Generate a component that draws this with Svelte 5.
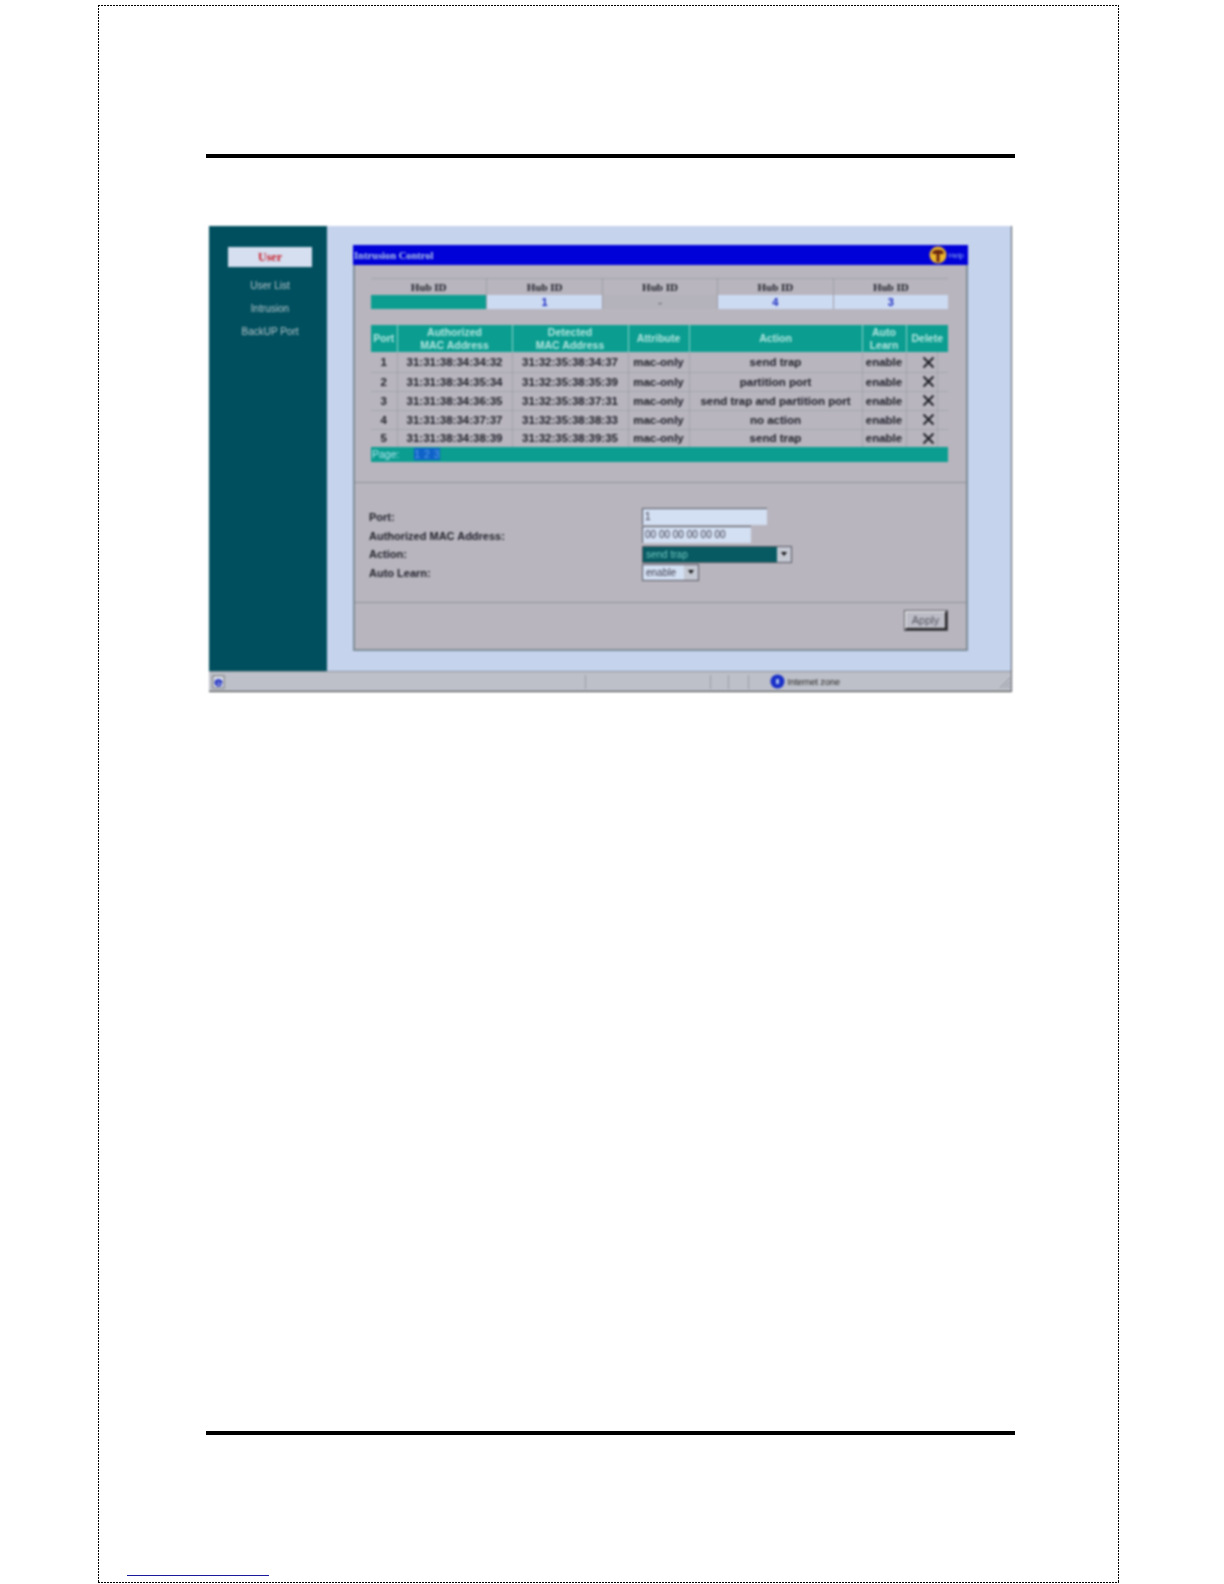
<script lang="ts">
  const hubs = ['', '1', '-', '4', '3'];
  const rows = [
    ['1', '31:31:38:34:34:32', '31:32:35:38:34:37', 'mac-only', 'send trap'],
    ['2', '31:31:38:34:35:34', '31:32:35:38:35:39', 'mac-only', 'partition port'],
    ['3', '31:31:38:34:36:35', '31:32:35:38:37:31', 'mac-only', 'send trap and partition port'],
    ['4', '31:31:38:34:37:37', '31:32:35:38:38:33', 'mac-only', 'no action'],
    ['5', '31:31:38:34:38:39', '31:32:35:38:39:35', 'mac-only', 'send trap']
  ];
  const colWidths = [26, 115, 116, 61, 173, 44, 31, 11];
  const formLabels = ['Port:', 'Authorized MAC Address:', 'Action:', 'Auto Learn:'];
</script>

<div class="sheet">
  <div class="rule"></div>

  <div class="shot">
    <div class="browser">
      <nav class="side">
        <div class="side-btn">User</div>
        <a href="#list">User List</a>
        <a href="#intrusion">Intrusion</a>
        <a href="#backup">BackUP Port</a>
      </nav>

      <main class="content">
        <section class="panel">
          <header class="title">
            <span>Intrusion Control</span>
            <span class="help">
              <svg width="18" height="18" viewBox="0 0 18 18" aria-hidden="true">
                <circle cx="9" cy="9" r="8.5" fill="#eab52a" />
                <path d="M3.5 5.5C6 3 12 3 14.5 5.5V8H10.5V16H7.5V8H3.5z" fill="#6a2412" />
              </svg>
              <small>Help</small>
            </span>
          </header>

          <div class="top">
            <div class="hubs">
              {#each hubs as hub, i}
                <div class="hub">
                  <div class="hub-head">Hub ID</div>
                  <div class="hub-val" class:sel={i === 0} class:off={i === 2}>{hub}</div>
                </div>
              {/each}
            </div>

            <table>
              <colgroup>
                {#each colWidths as w}<col style="width:{w}px" />{/each}
              </colgroup>
              <thead>
                <tr>
                  <th>Port</th>
                  <th>Authorized<br />MAC Address</th>
                  <th>Detected<br />MAC Address</th>
                  <th>Attribute</th>
                  <th>Action</th>
                  <th>Auto<br />Learn</th>
                  <th colspan="2">Delete</th>
                </tr>
              </thead>
              <tbody>
                {#each rows as row}
                  <tr>
                    {#each row as cell}
                      <td>{cell}</td>
                    {/each}
                    <td>enable</td>
                    <td class="del">
                      <svg width="13" height="13" viewBox="0 0 13 13" aria-hidden="true">
                        <path d="M1.5 1.5 11.5 11.5M11.5 1.5 1.5 11.5" stroke="#1a1a22" stroke-width="1.8" />
                      </svg>
                    </td>
                    <td></td>
                  </tr>
                {/each}
              </tbody>
            </table>

            <div class="pager">Page: <b>1 2 3</b></div>
          </div>

          <div class="form">
            <div class="labels">
              {#each formLabels as label}<div>{label}</div>{/each}
            </div>
            <div class="fields">
              <div class="field f-port">1</div>
              <div class="field f-mac">00 00 00 00 00 00</div>
              <div class="drop f-action">
                <span>send trap</span><i class="arrow"></i>
              </div>
              <div class="drop f-auto">
                <span>enable</span><i class="arrow"></i>
              </div>
            </div>
          </div>

          <div class="actions">
            <button type="button">Apply</button>
          </div>
        </section>
      </main>
    </div>

    <footer class="status">
      <svg class="ie" width="14" height="14" viewBox="0 0 14 14" aria-hidden="true">
        <rect x="1" y="1" width="11" height="12" fill="#e4e8f2" stroke="#555" stroke-width="0.8" />
        <path d="M3.5 7.5H9.5C9.5 4 3.5 4 3.5 7.5S7.5 11.5 9.5 9.5" fill="none" stroke="#2030c0" stroke-width="1.8" />
      </svg>
      <span class="grow"></span>
      <i class="sep s1"></i>
      <i class="sep s2"></i>
      <i class="sep s3"></i>
      <i class="sep s4"></i>
      <svg class="globe" width="15" height="15" viewBox="0 0 15 15" aria-hidden="true">
        <circle cx="7.5" cy="7.5" r="7" fill="#1a30c8" />
        <rect x="6" y="5" width="3" height="5" fill="#a8c0f0" />
      </svg>
      <span class="zone">Internet zone</span>
      <svg class="grip" width="14" height="14" viewBox="0 0 14 14" aria-hidden="true">
        <path d="M13 3 3 13M13 7 7 13M13 11 11 13" stroke="#8a8c94" stroke-width="1" />
      </svg>
    </footer>
  </div>

  <div class="rule bottom"></div>
  <div class="note-link"></div>
</div>

<style>
  :global(body) {
    margin: 0;
    background: #fff;
  }
  .sheet {
    box-sizing: border-box;
    width: 1021px;
    height: 1578px;
    margin: 5px 0 0 98px;
    padding: 149px 0 0 108px;
    position: relative;
    font-family: 'Liberation Sans', Arial, sans-serif;
    background:
      linear-gradient(90deg, #000 2px, transparent 2px) left top / 3px 1px repeat-x,
      linear-gradient(90deg, #000 2px, transparent 2px) left bottom / 3px 1px repeat-x,
      linear-gradient(#000 2px, transparent 2px) left top / 1px 3px repeat-y,
      linear-gradient(#000 2px, transparent 2px) right top / 1px 3px repeat-y;
  }
  .rule {
    height: 4px;
    background: #000;
    width: 809px;
  }
  .rule.bottom {
    margin-top: 739px;
  }
  .note-link {
    position: absolute;
    left: 29px;
    bottom: 7px;
    width: 142px;
    height: 1px;
    background: #1a1a9a;
  }

  .shot {
    box-sizing: border-box;
    width: 803px;
    height: 466px;
    margin: 68px 0 0 3px;
    display: flex;
    flex-direction: column;
    background: #bec1ca;
    border-right: 1px solid #50545e;
    filter: blur(0.9px);
    overflow: hidden;
  }
  .browser {
    flex: 1;
    display: flex;
    min-height: 0;
  }
  .side {
    width: 118px;
    flex: none;
    background: #004f5e;
    display: flex;
    flex-direction: column;
    align-items: center;
    padding: 21px 0 0 4px;
    box-sizing: border-box;
    font-size: 10px;
  }
  .side-btn {
    box-sizing: border-box;
    width: 84px;
    height: 20px;
    margin-bottom: 7px;
    background: #d5dff0;
    color: #c8202c;
    font: bold 12px/20px 'Liberation Serif', serif;
    text-align: center;
  }
  .side a {
    color: #b6c6cc;
    text-decoration: none;
    line-height: 23px;
  }

  .content {
    flex: 1;
    background: #c5d3ed;
    padding: 19px 43px 0 26px;
  }
  .panel {
    box-sizing: border-box;
    height: 406px;
    background: #b8b5be;
    border-right: 2px solid #7e8c96;
    border-bottom: 2px solid #7e8c96;
    border-left: 2px solid #7e8c96;
    display: flex;
    flex-direction: column;
  }
  .title {
    height: 20px;
    margin: 0 -2px;
    flex: none;
    display: flex;
    align-items: center;
    justify-content: space-between;
    background: #0000d8;
    color: #b0c8e8;
    font: bold 10.5px 'Liberation Serif', serif;
    padding-left: 1px;
    padding-right: 4px;
  }
  .help {
    display: flex;
    align-items: center;
    gap: 2px;
  }
  .help small {
    font: 7.5px 'Liberation Sans', sans-serif;
    color: #8fb0f0;
  }

  .top {
    padding: 13px 18px 20px 16px;
    border-bottom: 1px solid #8e939c;
  }
  .hubs {
    display: grid;
    grid-template-columns: repeat(5, 1fr);
    margin-bottom: 16px;
  }
  .hub + .hub {
    border-left: 1px solid #9c9ca6;
  }
  .hub-head {
    height: 17px;
    border-top: 1px solid #a0a0aa;
    box-sizing: border-box;
    text-align: center;
    font: bold 11px/17px 'Liberation Serif', serif;
    color: #20202a;
  }
  .hub-val {
    height: 14px;
    background: #cddbf2;
    color: #1a2ac0;
    text-align: center;
    font-size: 11px;
    font-weight: bold;
    line-height: 14px;
  }
  .hub-val.sel {
    background: #0b9d90;
  }
  .hub-val.off {
    background: #b4b2bb;
    color: #6a6a72;
  }

  table {
    width: 577px;
    border-collapse: collapse;
    table-layout: fixed;
    font-size: 11.5px;
  }
  th {
    height: 27px;
    padding: 0;
    background: #0b9d90;
    color: #b6e6e0;
    font-weight: bold;
    font-size: 10.5px;
    line-height: 13px;
    border-left: 1px solid #8cd0c8;
  }
  th:first-child {
    border-left: 0;
  }
  td {
    box-sizing: border-box;
    height: 19px;
    padding: 0;
    text-align: center;
    font-weight: bold;
    color: #20202a;
    border-left: 1px solid #a0a0aa;
    border-bottom: 1px solid #a4a4ae;
    white-space: nowrap;
  }
  td:first-child {
    border-left: 0;
  }
  tbody tr:first-child td {
    height: 20px;
    padding-top: 1px;
  }
  tr:last-child td {
    height: 18px;
    border-bottom: 0;
  }
  td.del {
    line-height: 0;
    text-align: right;
    padding-right: 2px;
  }
  .del svg {
    vertical-align: middle;
  }
  .pager {
    height: 15px;
    width: 577px;
    background: #0b9d90;
    color: #b6e6f0;
    font-size: 10.5px;
    line-height: 15px;
    padding-left: 1px;
    box-sizing: border-box;
  }
  .pager b {
    margin-left: 12px;
    background: #0f62c8;
    letter-spacing: 0.5px;
    color: #5aa0e8;
    font-weight: normal;
  }

  .form {
    display: flex;
    height: 120px;
    box-sizing: border-box;
    padding: 25px 0 0 14px;
    border-bottom: 1px solid #8e939c;
  }
  .labels {
    width: 273px;
    font-weight: bold;
    font-size: 11px;
    color: #20202a;
  }
  .labels div {
    height: 18.5px;
    line-height: 18.5px;
  }
  .fields {
    display: flex;
    flex-direction: column;
    align-items: flex-start;
    gap: 1px;
    font-size: 10px;
    color: #3a3a48;
  }
  .field {
    box-sizing: border-box;
    height: 17px;
    padding-left: 2px;
    background: #d3dff2;
    border-top: 1px solid #55565f;
    border-left: 1px solid #55565f;
    line-height: 16px;
  }
  .f-port { width: 125px; }
  .f-mac { width: 109px; }
  .drop {
    box-sizing: border-box;
    display: flex;
    height: 17px;
    background: #d3dff2;
    border: 1px solid #55565f;
    align-items: stretch;
  }
  .drop span {
    flex: 1;
    padding-left: 3px;
    line-height: 15px;
  }
  .f-action {
    width: 150px;
    margin-top: 2px;
  }
  .f-action span {
    background: #075a62;
    color: #70c8c0;
  }
  .f-auto { width: 57px; }
  .arrow {
    position: relative;
    width: 14px;
    background: #c4c8d2;
  }
  .arrow::after {
    content: '';
    position: absolute;
    left: 4px;
    top: 5px;
    border: 3px solid transparent;
    border-top: 4px solid #111;
    border-bottom: 0;
  }

  .actions {
    flex: 1;
    display: flex;
    justify-content: flex-end;
    align-items: flex-start;
    padding: 8px 19px 0 0;
  }
  button {
    width: 42px;
    height: 19px;
    padding: 0;
    background: #bcbcc6;
    border: 1px solid #fff;
    border-right: 2px solid #222;
    border-bottom: 2px solid #222;
    outline: 1px solid #55555f;
    color: #555560;
    font: 11px 'Liberation Sans', sans-serif;
  }

  .status {
    height: 21px;
    flex: none;
    box-sizing: border-box;
    display: flex;
    align-items: center;
    background: #bdc0c8;
    border-top: 1px solid #8e939c;
    padding-left: 3px;
    font-size: 9px;
    color: #222;
    position: relative;
    border-bottom: 1px solid #333;
  }
  .grow {
    flex: 1;
  }
  .sep {
    position: absolute;
    top: 3px;
    bottom: 2px;
    width: 1px;
    background: #9a9ca6;
  }
  .s1 { left: 376px; }
  .s2 { left: 501px; }
  .s3 { left: 519px; }
  .s4 { left: 539px; }
  .globe {
    margin-right: 2px;
  }
  .zone {
    margin-right: 157px;
  }
  .grip {
    flex: none;
  }
</style>
